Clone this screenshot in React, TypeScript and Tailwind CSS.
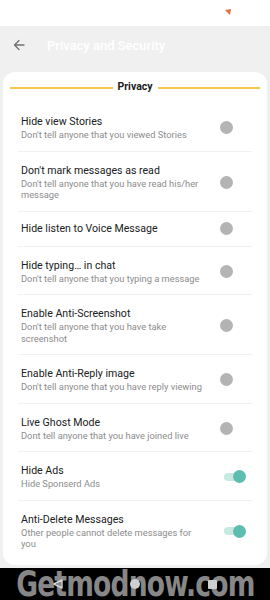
import React from "react";

type Item = { t: string; s?: string; on?: boolean };

const items: Item[] = [
  { t: "Hide view Stories", s: "Don't tell anyone that you viewed Stories" },
  { t: "Don't mark messages as read", s: "Don't tell anyone that you have read his/her message" },
  { t: "Hide listen to Voice Message" },
  { t: "Hide typing… in chat", s: "Don't tell anyone that you typing a message" },
  { t: "Enable Anti-Screenshot", s: "Don't tell anyone that you have take screenshot" },
  { t: "Enable Anti-Reply image", s: "Don't tell anyone that you have reply viewing" },
  { t: "Live Ghost Mode", s: "Dont tell anyone that you have joined live" },
  { t: "Hide Ads", s: "Hide Sponserd Ads", on: true },
  { t: "Anti-Delete Messages", s: "Other people cannot delete messages for you", on: true },
];

function Switch({ on }: { on?: boolean }) {
  return (
    <div className="relative w-[26px] h-[13px] mr-[6px] shrink-0">
      {on && <div className="absolute left-[4px] right-[4px] top-[2.5px] h-[8px] rounded-full bg-[#c6e9e4]" />}
      <div
        className={
          on
            ? "absolute top-0 right-0 w-[13px] h-[13px] rounded-full bg-[#5dbdb1]"
            : "absolute top-0 left-0 w-[13px] h-[13px] rounded-full bg-[#b4b4b4]"
        }
      />
    </div>
  );
}

export default function App() {
  return (
    <div
      className="relative w-[270px] h-[600px] overflow-hidden flex flex-col bg-[#f0f0f0]"
      style={{ fontFamily: "Roboto, 'Noto Sans', sans-serif" }}
    >
      {/* status bar */}
      <div className="h-[26px] bg-white flex justify-end items-start pt-[9px] pr-[38px] shrink-0">
        <svg width="7" height="6" viewBox="0 0 7 6">
          <path d="M0 1 L6 0 L5 6 Z" fill="#e2703f" />
        </svg>
      </div>

      {/* header */}
      <div className="h-[46px] pb-[8px] flex items-center shrink-0">
        <svg className="ml-[13px]" width="12" height="12" viewBox="0 0 12 12" fill="none">
          <path d="M11 6 H1.5 M6 1.5 L1.5 6 L6 10.5" stroke="#707070" strokeWidth="1.3" strokeLinecap="round" strokeLinejoin="round" />
        </svg>
        <span className="ml-[22px] text-[13px] font-medium text-white leading-none">Privacy and Security</span>
      </div>

      {/* card */}
      <div className="flex-1 mx-[3px] mb-[3px] bg-white rounded-[12px] flex flex-col">
        <div className="h-[31px] flex items-center px-[7px] gap-[5px]">
          <div className="flex-1 h-[2px] bg-[#f4c84a]" />
          <span className="text-[10.5px] font-bold text-[#1c1c1c] leading-none">Privacy</span>
          <div className="flex-1 h-[2px] bg-[#f4c84a]" />
        </div>
        <div className="px-[15px] flex flex-col">
          {items.map((it, i) => {
            const last = i === items.length - 1;
            const cls = last
              ? "flex items-center justify-between pl-[3px] pt-[12px] pb-[15px]"
              : it.s
              ? "flex items-center justify-between pl-[3px] pt-[12px] pb-[10px] border-b border-[#f0f0f0]"
              : "flex items-center justify-between pl-[3px] py-[10px] border-b border-[#f0f0f0]";
            return (
              <div key={i} className={cls}>
                <div className="w-[185px] flex flex-col">
                  <div className="text-[10.6px] leading-[14px] text-[#202020]">{it.t}</div>
                  {it.s && <div className="text-[9.3px] leading-[11.5px] text-[#8c8c8c]">{it.s}</div>}
                </div>
                <Switch on={it.on} />
              </div>
            );
          })}
        </div>
      </div>

      {/* nav bar */}
      <div className="relative h-[32px] bg-black shrink-0">
        <div className="absolute inset-0 flex items-center justify-center">
          <span
            className="text-[36px] font-bold leading-[28px] text-[#878787] scale-x-[0.82] tracking-[-1px] whitespace-nowrap"
            style={{ fontFamily: "'DejaVu Sans Condensed', 'Liberation Sans Narrow', sans-serif" }}
          >
            Getmodnow.com
          </span>
        </div>
        <svg className="absolute left-[53px] top-[11px]" width="10" height="10" viewBox="0 0 10 10">
          <path d="M9 1 L1 5 L9 9 Z" fill="none" stroke="#d8d8d8" strokeWidth="1.4" strokeLinejoin="round" />
        </svg>
        <div className="absolute left-[130px] top-[11px] w-[10px] h-[10px] rounded-full bg-[#cfcfcf]" />
        <div className="absolute left-[208px] top-[11.5px] w-[9px] h-[9px] bg-[#cfcfcf] rounded-[1px]" />
      </div>
    </div>
  );
}
